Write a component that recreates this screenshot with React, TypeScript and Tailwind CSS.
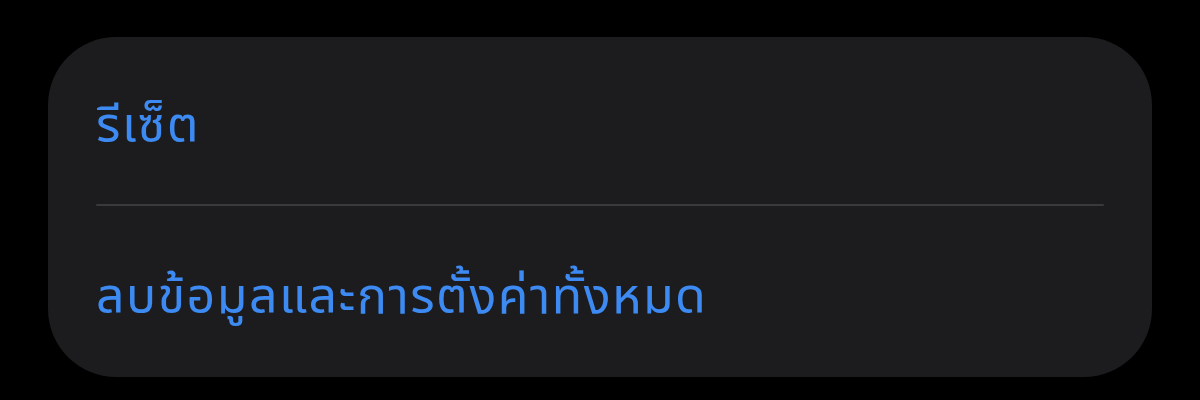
import React from 'react';

const thaiFont = { fontFamily: '"Noto Sans Thai", "Noto Sans", "DejaVu Sans", sans-serif' };

export default function App() {
  return (
    <div className="w-[1200px] h-[400px] bg-black pt-[37px] px-[48px]">
      <div className="w-[1104px] h-[340px] bg-[#1c1c1e] rounded-[68px] px-[48px] flex flex-col">
        {/* reset section */}
        <div className="h-[167px] flex items-center pt-[12px]">
          <span className="text-[50px] leading-none tracking-[1.5px] text-[#3d8bf2]" style={thaiFont}>
            รีเซ็ต
          </span>
        </div>
        <div className="h-[2px] bg-[#3a3a3c] rounded-full" />
        <div className="flex-1 flex items-center pt-[12px]">
          <span className="text-[50px] leading-none tracking-[1.5px] text-[#3d8bf2]" style={thaiFont}>
            ลบข้อมูลและการตั้งค่าทั้งหมด
          </span>
        </div>
      </div>
    </div>
  );
}
